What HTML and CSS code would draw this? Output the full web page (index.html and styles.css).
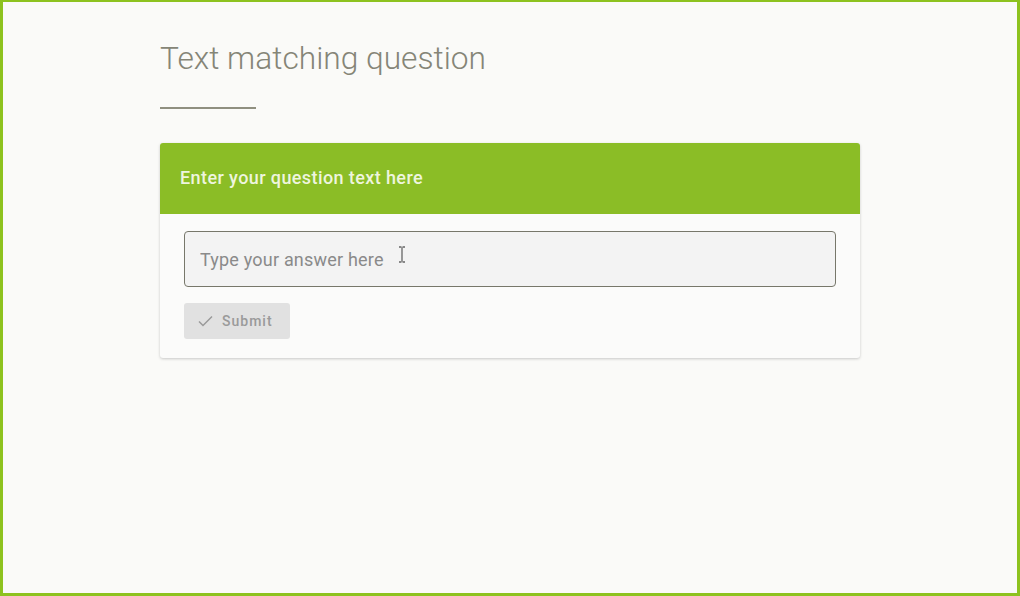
FILE: index.html
```html
<!DOCTYPE html>
<html lang="en">
<head>
    <meta charset="UTF-8">
    <meta name="viewport" content="width=device-width, initial-scale=1.0">
    <title>Text matching question</title>
    <link rel="stylesheet" href="styles.css">
</head>
<body>
    <div class="frame">
        <div class="page">
            <h1 class="page-title">Text matching question</h1>
            <div class="title-rule"></div>

            <div class="card">
                <div class="card-header">Enter your question text here</div>
                <div class="card-body">
                    <div class="answer-field">
                        <input type="text" class="answer-input" placeholder="Type your answer here">
                        <svg class="ibeam" width="8" height="17" viewBox="0 0 8 17">
                            <path d="M1 1h2.5M4.5 1H7M4 1.5v14M1 16h2.5M4.5 16H7" stroke="#666" stroke-width="1.3" fill="none"/>
                        </svg>
                    </div>
                    <button type="button" class="submit-btn" disabled>
                        <svg width="15" height="12" viewBox="0 0 15 12">
                            <path d="M1 6.5l4 4L14 1.5" stroke="#9a9a9a" stroke-width="1.5" fill="none"/>
                        </svg>
                        Submit
                    </button>
                </div>
            </div>
        </div>
    </div>
</body>
</html>
```

FILE: styles.css
```css
/* General Styles */
body {
    margin: 0;
    font-family: Roboto, "Liberation Sans", Arial, sans-serif;
    background-color: #fafaf8;
}

.frame {
    height: 100vh;
    box-sizing: border-box;
    border: 3px solid #8dc21f;
    border-top-width: 2px;
}

.page {
    width: 700px;
    margin: 0 auto;
    padding-top: 37px;
}

.page-title {
    margin: 0;
    font-size: 31.7px;
    font-weight: 300;
    color: #858577;
    line-height: 40px;
}

.title-rule {
    width: 96px;
    height: 2px;
    background-color: #8f8f80;
    margin-top: 28px;
}

.card {
    margin-top: 34px;
    background-color: #fbfbfa;
    border-radius: 3px;
    box-shadow: 0 1px 3px rgba(0, 0, 0, 0.2);
    overflow: hidden;
}

.card-header {
    background-color: #8bbd26;
    color: #eef5de;
    font-size: 18px;
    font-weight: 500;
    letter-spacing: 0.4px;
    height: 71px;
    line-height: 70px;
    padding: 0 20px;
}

.card-body {
    padding: 17px 24px 19px;
}

.answer-field {
    position: relative;
}

.answer-input {
    width: 100%;
    height: 56px;
    box-sizing: border-box;
    border: 1px solid #77776a;
    border-radius: 4px;
    background-color: #f3f3f3;
    padding: 0 15px;
    font-family: inherit;
    font-size: 18px;
    letter-spacing: 0.2px;
    color: #333;
    outline: none;
}

.answer-input::placeholder {
    color: #8a8a8a;
}

.ibeam {
    position: absolute;
    left: 214px;
    top: 15px;
}

.submit-btn {
    margin-top: 16px;
    display: flex;
    align-items: center;
    gap: 9px;
    width: 106px;
    height: 36px;
    padding: 0 14px;
    border: none;
    border-radius: 3px;
    background-color: #e1e1e1;
    color: #9a9a9a;
    font-family: inherit;
    font-size: 14px;
    font-weight: 500;
    letter-spacing: 1px;
}
```
